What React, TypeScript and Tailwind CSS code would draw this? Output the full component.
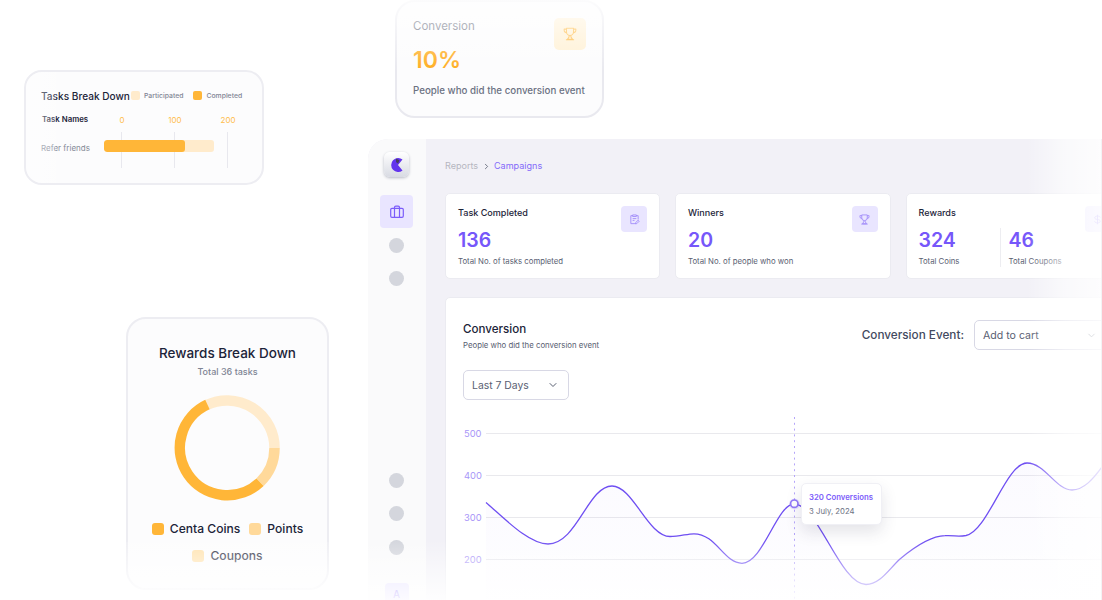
import type { ReactNode } from "react";
import { ChevronDown, ChevronRight } from "lucide-react";
import clsx from "clsx";

const stats = [
  {
    title: "Task Completed",
    icon: "tasks",
    width: "w-[215px]",
    values: [{ value: "136", label: "Total No. of tasks completed" }],
  },
  {
    title: "Winners",
    icon: "trophy",
    width: "w-[215.5px]",
    values: [{ value: "20", label: "Total No. of people who won" }],
  },
  {
    title: "Rewards",
    icon: "dollar",
    width: "w-[218px]",
    values: [
      { value: "324", label: "Total Coins" },
      { value: "46", label: "Total Coupons" },
    ],
  },
];

const gridLines = [433.5, 475.5, 517.5, 559.5];

const linePath =
  "M486 502.5 C505 519 529 544 548 544 C577 544 588 486 612 486 C633 486 648 536.5 670 536.5 C680 536.5 687 533.8 694 533.8 C716 533.8 724 563.3 742 563.3 C763 563.3 777 504 794 504 C818 504 840 584.5 866 584.5 C880 584.5 889 569 900 559 C912 549 930 536 945 535.7 C955 535.2 957 537 966 535.5 C988 531 1006 463 1027 463 C1045 463 1056 490 1072 490 C1084 490 1094 478 1102 467";

const Trophy = ({ className }: { className?: string }) => (
  <svg viewBox="0 0 12 12" fill="none" stroke="currentColor" strokeWidth="0.9" strokeLinejoin="round" className={className}>
    <path d="M3 1h6v3.2a3 3 0 0 1-6 0ZM3 1.8H1v1a2 2 0 0 0 2.2 2M9 1.8h2v1a2 2 0 0 1-2.2 2M5.2 7.2v1.3L3.8 10.6h4.4L6.8 8.5V7.2M2.5 11h7" />
  </svg>
);

const Tasks = ({ className }: { className?: string }) => (
  <svg viewBox="0 0 12 12" fill="none" stroke="currentColor" strokeWidth="0.9" strokeLinejoin="round" className={className}>
    <path d="M4 1.8H2v8.7h4.500M10 6V1.8H8M4 1h4v1.7H4ZM4 5h4M4 7h2M7 10.800l.3-1.500L10 6.800l1.100 1.100-2.600 2.600Z" />
  </svg>
);

const Dollar = ({ className }: { className?: string }) => (
  <svg viewBox="0 0 12 12" fill="none" stroke="currentColor" strokeWidth="1" className={className}>
    <path d="M6 .8v10.4M9 3.8C9 2.8 7.800 2.300 6 2.300S3 3 3 4.100s1 1.600 3 1.900 3 .8 3 1.900-1.200 1.800-3 1.800-3-.6-3-1.700" />
  </svg>
);

const StatIcon = ({ name }: { name: string }) => {
  if (name === "trophy") return <Trophy className="size-[11px]" />;
  if (name === "dollar") return <Dollar className="size-[11px]" />;
  return <Tasks className="size-[11px]" />;
};

const Legend = ({ color, children }: { color: string; children: ReactNode }) => (
  <div className="flex items-center gap-1.5">
    <span className={clsx("size-3 rounded-[3px]", color)} />
    {children}
  </div>
);

const TasksCard = () => (
  <div className="relative ml-6 mt-[70px] h-[115px] w-[240px] overflow-hidden rounded-[18px] border-2 border-[#ededf2] bg-[#fcfcfd] pl-[15px] pr-[18px] pt-[16px]">
    <div className="flex h-4 items-center">
      <h3 className="w-[90px] pt-px text-[10.100px] font-medium text-[#1c2439]">Tasks Break Down</h3>
      <div className="flex items-center text-[6.850px] font-medium text-[#7f8494]">
        <span className="mr-[4px] size-[9px] rounded-[2px] bg-[#ffebcc]" />
        Participated
        <span className="ml-[10px] mr-[4px] size-[9px] rounded-[2px] bg-[#ffb638]" />
        Completed
      </div>
    </div>
    <div className="mt-[10px] flex h-3 items-center pl-[1px] text-[8px]">
      <span className="w-[70px] text-[7.800px] font-semibold text-[#1c2439]">Task Names</span>
      <div className="flex text-[#ffbd4c]">
        <span className="w-[20px] text-center">0</span>
        <span className="w-[86px] text-center">100</span>
        <span className="w-[20px] text-center">200</span>
      </div>
    </div>
    <div className="mt-[6px] flex h-[36px] items-center">
      <span className="w-[63px] pb-[5px] text-[8px] text-[#858a98]">Refer friends</span>
      <div className="relative flex h-full w-[124px] items-center pb-[9px]">
        <div className="absolute inset-y-0 left-[16.500px] flex w-[107.500px] justify-between">
          <span className="w-px bg-[#e8e8ee]" />
          <span className="w-px bg-[#e8e8ee]" />
          <span className="w-px bg-[#e8e8ee]" />
        </div>
        <div className="relative h-[12px] w-[110px] overflow-hidden rounded-[3px] bg-[#ffebcc]">
          <div className="h-full w-[81px] rounded-[3px] bg-[#ffb638]" />
        </div>
      </div>
    </div>
    <div className="absolute -inset-y-0.5 -left-0.5 w-8 bg-gradient-to-r from-white/50 to-white/20" />
  </div>
);

const RewardsCard = () => (
  <div className="relative ml-[126px] mt-[132px] flex h-[273px] w-[203px] flex-col items-center rounded-[20px] border-2 border-[#ededf2] bg-[#fcfcfd] pt-[24px]">
    <h3 className="text-[13.500px] leading-5 font-medium text-[#1c2439]">Rewards Break Down</h3>
    <p className="mt-px text-[9px] leading-4 font-medium text-[#7f8494]">Total 36 tasks</p>
    <svg viewBox="0 0 106 106" className="mr-px mt-[15px] size-[106px] fill-none" strokeWidth="10.500">
      <path d="M32.600 10 A47.500 47.500 0 0 1 100.500 53" stroke="#ffebcc" />
      <path d="M100.500 53 A47.500 47.500 0 0 1 86 87.200" stroke="#ffd99a" />
      <path d="M86 87.200 A47.500 47.500 0 1 1 33.400 9.600" stroke="#ffb638" />
    </svg>
    <div className="mt-[18px] flex flex-wrap justify-center gap-x-[9px] gap-y-[7px] text-[12.100px] leading-5 font-medium text-[#1c2439]">
      <Legend color="bg-[#ffb638]">Centa Coins</Legend>
      <Legend color="bg-[#ffd99a]">Points</Legend>
      <Legend color="bg-[#ffe0a8]">Coupons</Legend>
    </div>
    <div className="absolute -inset-x-0.5 -bottom-0.5 h-[48px] bg-gradient-to-b from-white/15 to-white/85" />
  </div>
);

const ConversionCard = () => (
  <div className="relative ml-[27px] h-[118px] w-[209px] shrink-0 rounded-[20px] border-2 border-[#e9e9ef] bg-[#fcfcfd] pl-4 pt-[15px]">
    <div className="flex h-[66px] justify-between pr-4">
      <div>
        <p className="text-[11.500px] leading-[18px] text-[#596072]">Conversion</p>
        <p className="mt-[9px] text-[23px] leading-8 font-semibold text-[#ffac1c]">10%</p>
      </div>
      <div className="mt-px grid size-8 place-items-center rounded-[5px] bg-[#fff0d2] text-[#ffb638]">
        <Trophy className="size-[14px]" />
      </div>
    </div>
    <p className="text-[9.750px] leading-4 font-medium text-[#6b7182]">People who did the conversion event</p>
    <div className="absolute -inset-x-0.5 -top-0.5 h-[72px] bg-gradient-to-b from-white/85 via-white/40 to-white/0" />
  </div>
);

const Sidebar = () => (
  <aside className="flex w-[58px] shrink-0 flex-col items-center rounded-tl-[20px] bg-[#fafafb] pr-px pt-[13px]">
    <div className="grid size-[25px] shrink-0 place-items-center rounded-[6px] bg-gradient-to-b from-white to-[#d9dbe3] shadow-[0_1px_3px_#b8bbc6]">
      <svg viewBox="0 0 14 16" className="h-4 w-3.5">
        <path d="M12.500 2.500A7 7 0 1 0 12.500 13.500L8 8Z" fill="#6334ed" />
        <path d="M6 1.500 9.500 3.200 8 6.500 6 5Z" fill="#463c62" />
      </svg>
    </div>
    <div className="mt-[18px] grid size-[33px] shrink-0 place-items-center rounded-[4px] bg-[#e9e5ff] text-[#7b5cfa]">
      <svg viewBox="0 0 14 14" fill="none" stroke="currentColor" strokeWidth="1.200" className="size-3.5">
        <rect x=".7" y="3.300" width="12.600" height="9" rx="1.300" />
        <path d="M4.500 12.300V2.500q0-1.300 1.300-1.300h2.400q1.300 0 1.300 1.300v9.800" />
      </svg>
    </div>
    <div className="mt-[9.500px] flex flex-col gap-[18.500px]">
      <span className="size-[15px] rounded-full bg-[#d4d6dd]" />
      <span className="size-[15px] rounded-full bg-[#d4d6dd]" />
    </div>
    <div className="mt-[187px] flex flex-col gap-[18.300px]">
      <span className="size-[15px] rounded-full bg-[#d4d6dd]" />
      <span className="size-[15px] rounded-full bg-[#d4d6dd]" />
      <span className="size-[15px] rounded-full bg-[#d4d6dd]" />
    </div>
    <div className="mt-[28px] grid size-6 shrink-0 place-items-center rounded-[4px] bg-[#e2dcff] text-[10px] font-medium text-[#7b5cfa]">A</div>
  </aside>
);

const Chart = () => (
  <div className="relative mt-[10px] flex">
    <div className="flex w-[22px] flex-col gap-[26.300px] pl-px pt-[15.600px] text-[9.400px] leading-4 text-[#a896f8]">
      <span>500</span>
      <span>400</span>
      <span>300</span>
      <span>200</span>
    </div>
    <svg viewBox="485 410 617 190" fill="none" className="h-[190px] w-[617px] shrink-0">
      <defs>
        <linearGradient id="area" x1="0" y1="460" x2="0" y2="600" gradientUnits="userSpaceOnUse">
          <stop stopColor="#7b5cfa" stopOpacity=".03" />
          <stop offset="1" stopColor="#7b5cfa" stopOpacity=".01" />
        </linearGradient>
      </defs>
      {gridLines.map((y) => (
        <path key={y} d={`M486 ${y}H1102`} stroke="#e9e9ed" />
      ))}
      <path d={`${linePath}V600H486Z`} fill="url(#area)" />
      <path d={linePath} stroke="#6f4ff2" strokeWidth="1.300" />
      <path d="M794.500 417V600" stroke="#b5a5fa" strokeDasharray="2 3.800" />
      <circle cx="794.500" cy="504" r="5.500" fill="#7b5cfa" fillOpacity=".15" />
      <circle cx="794.300" cy="503.700" r="3.700" fill="#fff" stroke="#9279f8" strokeWidth="1.700" />
    </svg>
    {/* Tooltip */}
    <div className="absolute left-[338px] top-[73px] h-[42px] w-[81px] rounded-[5px] border border-[#f0f0f5] bg-white pl-[7px] pt-[6px] text-[7.750px] shadow-[0_7px_16px_rgba(50,50,80,0.13)]">
      <p className="leading-[14px] font-semibold text-[#7b5cfa]">320 Conversions</p>
      <p className="leading-[15px] text-[#6c7283]">3 July, 2024</p>
    </div>
  </div>
);

const App = () => {
  return (
    <main className="flex h-[600px] w-[1102px] overflow-hidden bg-white font-['Inter',sans-serif] whitespace-nowrap">
      {/* Breakdown cards */}
      <div className="w-[368px] shrink-0">
        <TasksCard />
        <RewardsCard />
      </div>

      <div className="flex w-[734px] shrink-0 flex-col">
        <ConversionCard />

        {/* Dashboard */}
        <div className="relative mt-[21px] flex h-[461px] overflow-hidden rounded-tl-[20px] bg-[#f2f1f7]">
          <Sidebar />
          <section className="min-w-0 flex-1 overflow-hidden pl-[19px] pt-[19px]">
            <div className="flex h-4 items-center text-[9.050px]">
              <span className="w-[34px] text-[#b5b6c0]">Reports</span>
              <ChevronRight className="mx-[3px] size-[9px] text-[#4f5668]" />
              <span className="text-[#846afa]">Campaigns</span>
            </div>

            <div className="mt-[19px] flex gap-[15px]">
              {stats.map((stat) => (
                <div key={stat.title} className={clsx("flex h-[86px] shrink-0 justify-between rounded-[5px] border border-[#ebebf1] bg-white pl-3 pr-3 pt-3", stat.width)}>
                  <div>
                    <h4 className="text-[9.050px] leading-[14px] font-medium text-[#1c2439]">{stat.title}</h4>
                    <div className="mt-[8px] flex">
                      {stat.values.map((item, i) => (
                        <div key={item.label} className={clsx(i === 0 ? "min-w-[81px]" : "border-l border-[#ededf1] pl-2")}>
                          <p className="text-[19.500px] leading-[25px] font-semibold text-[#7657fa]">{item.value}</p>
                          <p className="mt-[2px] text-[7.780px] leading-3 text-[#596072]">{item.label}</p>
                        </div>
                      ))}
                    </div>
                  </div>
                  <div className="-ml-8 grid size-[26px] shrink-0 place-items-center rounded-[4px] bg-[#e9e5ff] text-[#9b85f9]">
                    <StatIcon name={stat.icon} />
                  </div>
                </div>
              ))}
            </div>

            <div className="mt-[18px] h-[320px] w-[700px] rounded-tl-[5px] border border-[#ebebf1] bg-white pl-[17px] pt-[22px]">
              <div className="flex h-[50px] justify-between">
                <div>
                  <h3 className="text-[11.600px] leading-[18px] font-medium text-[#1c2439]">Conversion</h3>
                  <p className="mt-[1px] text-[7.800px] leading-3 text-[#596072]">People who did the conversion event</p>
                </div>
                <div className="flex h-[30px] items-center gap-[10px] text-[11.750px] font-medium text-[#434a60]">
                  <span className="pt-px">Conversion Event:</span>
                  <div className="flex h-[30px] w-[170px] items-center rounded-[5px] border border-[#d8d8e5] pl-2 text-[10.600px] font-normal text-[#596072]">
                    <span className="w-[103px] pt-px">Add to cart</span>
                    <ChevronDown className="size-[11px]" />
                  </div>
                </div>
              </div>
              <div className="flex h-[30px] w-[106px] items-center justify-between rounded-[5px] border border-[#d8d8e5] pl-2 pr-[9px] text-[10.400px] text-[#596072]">
                <span className="pt-px">Last 7 Days</span>
                <ChevronDown className="size-[12px]" />
              </div>
              <Chart />
            </div>
          </section>

          {/* Edge fades */}
          <div className="absolute inset-x-0 bottom-0 h-[60px] bg-gradient-to-b from-white/0 via-white/50 to-white/90" />
          <div className="absolute inset-y-0 right-0 w-[75px] bg-gradient-to-r from-white/0 via-white/60 to-white/85" />
          <div className="absolute inset-y-0 right-0 w-px bg-[#f3f3f5]" />
        </div>
      </div>
    </main>
  );
};

export default App;
